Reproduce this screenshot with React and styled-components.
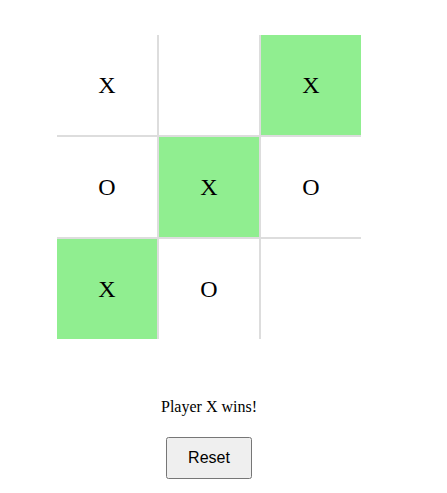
import React, { useState } from "react";
import styled, { createGlobalStyle } from "styled-components";

const GlobalStyle = createGlobalStyle`
  body {
    margin: 8px;
    background: #fff;
    font-family: "Liberation Serif", "Times New Roman", serif;
  }
`;

const initial = ["X", "", "X", "O", "X", "O", "X", "O", ""];
const winLine = [2, 4, 6];

const App = () => {
  const [squares, setSquares] = useState(initial);
  const [line, setLine] = useState(winLine);

  const reset = () => {
    setSquares(Array(9).fill(""));
    setLine([]);
  };

  return (
    <>
      <GlobalStyle />
      <Game>
        <Board>
          {squares.map((value, i) => (
            <Square key={i} $win={line.includes(i)}>
              {value}
            </Square>
          ))}
        </Board>
        <Status>{line.length ? "Player X wins!" : "Next player: X"}</Status>
        <ResetButton onClick={reset}>Reset</ResetButton>
      </Game>
    </>
  );
};

const Game = styled.div`
  width: 402px;
  padding-top: 27px;
  display: flex;
  flex-direction: column;
  align-items: center;
`;

const Board = styled.div`
  display: grid;
  grid-template-columns: repeat(3, 100px);
  grid-template-rows: repeat(3, 100px);
  gap: 2px;
  background: #dddddd;
`;

const Square = styled.div`
  display: flex;
  align-items: center;
  justify-content: center;
  background: ${(p) => (p.$win ? "#90ee90" : "#ffffff")};
  font-size: 24px;
  color: #000;
`;

const Status = styled.div`
  margin-top: 59px;
  font-size: 16px;
  line-height: 18px;
  color: #000;
`;

const ResetButton = styled.button`
  margin-top: 21px;
  padding: 10px 20px;
  font-family: "Liberation Sans", Arial, sans-serif;
  font-size: 16px;
`;

export default App;
